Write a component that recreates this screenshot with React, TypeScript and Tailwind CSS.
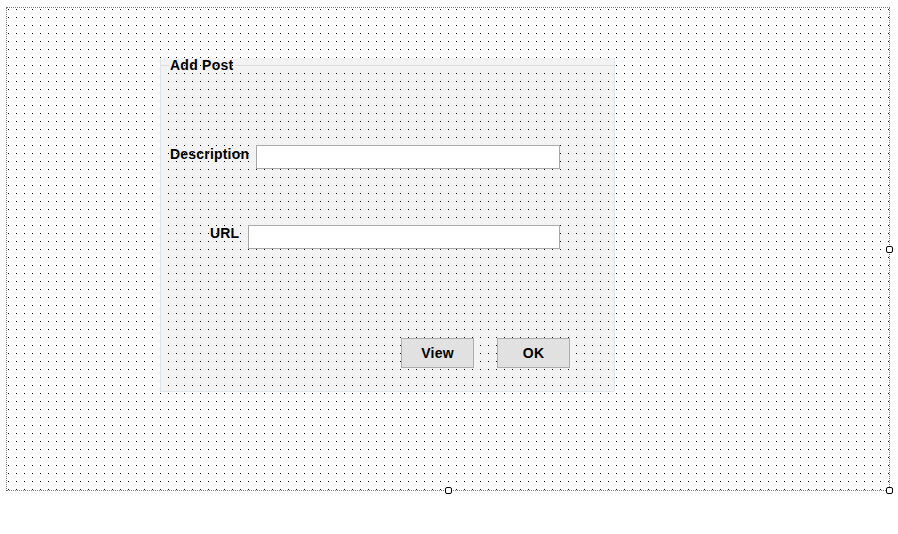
import React from "react";

const dots =
  "bg-[conic-gradient(from_270deg_at_1px_1px,#000_25%,transparent_0)] bg-[length:8px_8px] bg-[position:0px_1px] bg-fixed";

function Handle({ cls }: { cls: string }) {
  return (
    <div
      className={`absolute w-[7px] h-[7px] border border-black bg-white rounded-[2px] ${cls}`}
    />
  );
}

export default function App() {
  return (
    <div
      className="w-[898px] h-[534px] bg-white pt-[7px] pl-[6px] text-black"
      style={{ fontFamily: '"Liberation Sans", Arial, sans-serif' }}
    >
      <div
        className={`relative w-[884px] h-[484px] border border-dotted border-[#7a7a7a] bg-white ${dots} pt-[50px] pl-[153px]`}
      >
        <div
          className={`flex flex-col w-[455px] h-[334px] border-l border-r border-b border-[#dde4ea] bg-[#f3f3f3] ${dots} rounded-br-[2px]`}
        >
          {/* title */}
          <div className="flex items-center h-[14px]">
            <div className="w-[8px] h-px bg-[#dcdcdc]" />
            <span className="ml-[1px] text-[14px] leading-[14px] font-bold tracking-[0.25px] whitespace-nowrap">
              Add Post
            </span>
            <div className="ml-[2px] flex-1 h-px bg-[#dcdcdc]" />
          </div>

          {/* description row */}
          <div className="flex items-start mt-[73px] pl-[9px]">
            <span className="w-[86px] mt-[2px] text-[14px] leading-[14px] font-bold tracking-[0.2px] whitespace-nowrap">
              Description
            </span>
            <div className="w-[304px] h-[24px] border border-[#a9a9a9] bg-white" />
          </div>

          {/* url row */}
          <div className="flex items-start mt-[56px] pl-[49px]">
            <span className="w-[38px] mt-[1px] text-[14px] leading-[14px] font-bold tracking-[0.2px] whitespace-nowrap">
              URL
            </span>
            <div className="w-[312px] h-[24px] border border-[#a9a9a9] bg-white" />
          </div>

          {/* buttons */}
          <div className="flex items-start mt-[89px] pl-[240px] gap-[23px]">
            <div className="w-[73px] h-[30px] border border-[#adadad] bg-[#e1e1e1] flex items-center justify-center text-[14px] leading-[14px] font-bold tracking-[0.2px] pb-[1px]">
              View
            </div>
            <div className="w-[73px] h-[30px] border border-[#adadad] bg-[#e1e1e1] flex items-center justify-center text-[14px] leading-[14px] font-bold tracking-[0.2px] pb-[1px]">
              OK
            </div>
          </div>
        </div>

        <Handle cls="left-[879px] top-[238px]" />
        <Handle cls="left-[438px] top-[479px]" />
        <Handle cls="left-[879px] top-[479px]" />
      </div>
    </div>
  );
}
